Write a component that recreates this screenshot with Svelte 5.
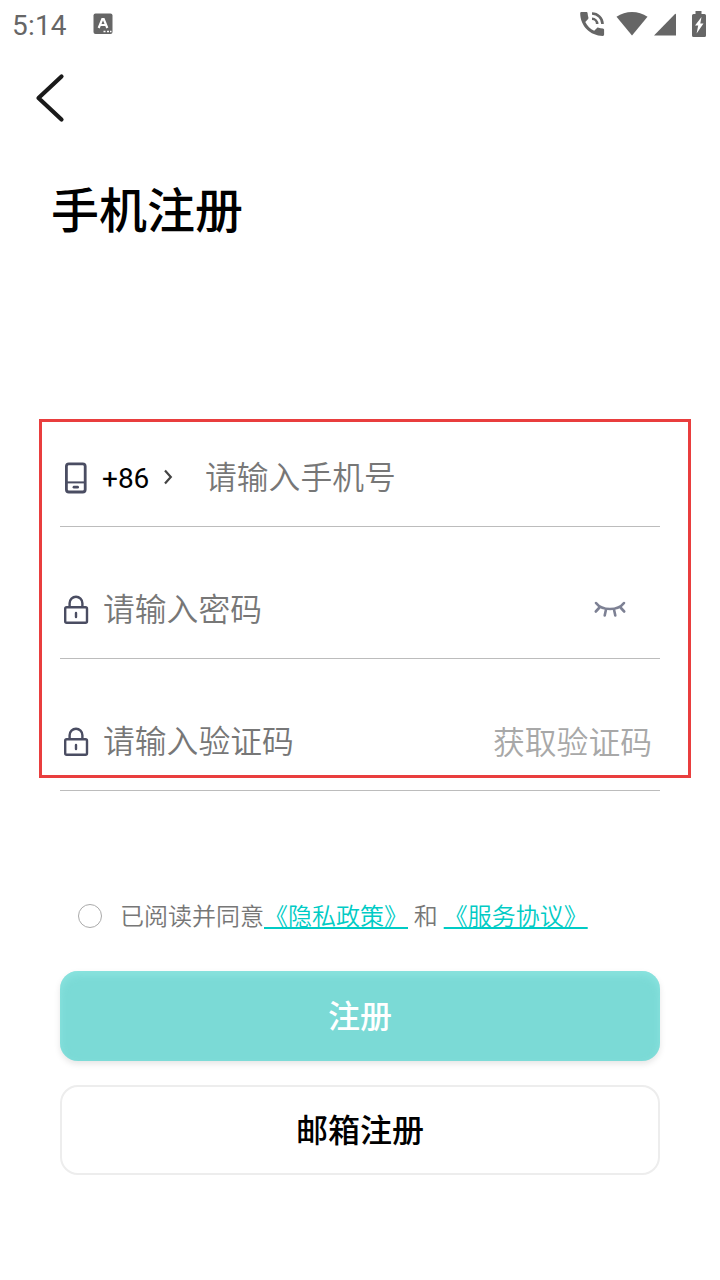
<style>
  :global(body) {
    background: #fff;
  }

  .page {
    position: relative;
    width: 720px;
    height: 1280px;
    box-sizing: border-box;
    overflow: hidden;
    background: #fff;
    color: #000;
    font-family: Roboto, "Noto Sans CJK SC", sans-serif;
  }

  svg {
    display: block;
    flex: none;
  }

  .status {
    display: flex;
    align-items: center;
    height: 48px;
    padding: 0 13px 0 12px;
    color: #666;
  }

  .time {
    width: 81px;
    font-size: 28px;
    line-height: 48px;
    padding-top: 3px;
    letter-spacing: 0.2px;
  }

  .status-icons {
    display: flex;
    align-items: center;
    margin-left: auto;
  }

  .back {
    display: block;
    margin: 24px 0 0 34px;
    padding: 0;
    border: 0;
    background: none;
  }

  h1 {
    margin: 52px 0 0 51px;
    height: 72px;
    font-size: 48px;
    font-weight: 500;
    line-height: 72px;
  }

  .fields {
    margin: 182px 60px 0;
  }

  .row {
    display: flex;
    align-items: center;
    height: 96px;
    margin-top: 35px;
    border-bottom: 1px solid #bcbcbc;
  }

  .row:first-child {
    margin-top: 0;
  }

  .code {
    display: flex;
    align-items: center;
    width: 103px;
    padding: 2px 0 0;
    border: 0;
    background: none;
    color: #000;
    font-family: inherit;
    font-size: 28px;
    line-height: 32px;
  }

  .code svg {
    margin: -4px 0 0 14px;
  }

  input {
    flex: 1;
    min-width: 0;
    height: 60px;
    padding: 0;
    border: 0;
    outline: none;
    background: none;
    color: #000;
    font-family: inherit;
    font-size: 31.8px;
    font-weight: 350;
  }

  input::placeholder {
    color: #777;
    opacity: 1;
  }

  .icon {
    margin: -1px 11px 0 0;
  }

  .eye {
    margin-right: 32px;
    padding: 0;
    border: 0;
    background: none;
  }

  .send {
    padding: 2px 0 0;
    margin-right: 8px;
    border: 0;
    background: none;
    color: #a8a8a8;
    font-family: inherit;
    font-size: 31.8px;
    font-weight: 350;
    line-height: 60px;
  }

  .agreement {
    display: flex;
    align-items: center;
    height: 48px;
    margin: 101px 0 0 78px;
    color: #777;
    font-size: 24px;
    font-weight: 350;
    white-space: pre;
  }

  .agreement-text {
    margin-top: -3px;
  }

  .radio {
    width: 24px;
    height: 24px;
    box-sizing: border-box;
    margin-right: 18px;
    border: 1px solid #aaa;
    border-radius: 50%;
  }

  .agreement a {
    color: #00cbc5;
    text-decoration: underline 1.5px #00cbc5;
    text-underline-offset: 2px;
  }

  .actions {
    display: grid;
    gap: 24px;
    margin: 31px 60px 0;
  }

  .btn {
    height: 90px;
    box-sizing: border-box;
    padding: 0 0 5px;
    border: 2px solid #ededed;
    border-radius: 18px;
    background: #fff;
    color: #000;
    font-family: inherit;
    font-size: 32px;
    font-weight: 500;
  }

  .btn.primary {
    border: 0;
    background: #7bdad6;
    color: #fff;
    box-shadow:
      0 3px 6px rgba(0, 0, 0, 0.1),
      inset 0 4px 9px rgba(150, 235, 230, 0.6);
  }

  .highlight {
    position: absolute;
    left: 39px;
    top: 419px;
    width: 652px;
    height: 359px;
    box-sizing: border-box;
    border: 3px solid #e93e3e;
    pointer-events: none;
  }
</style>

<script lang="ts">
  let phone = "";
  let password = "";
  let code = "";
  let agreed = false;
</script>

{#snippet lock()}
  <svg class="icon" width="32" height="32" viewBox="0 0 32 32" fill="none" stroke="#4a4d62" stroke-width="2.4">
    <rect x="5.2" y="13.2" width="21.8" height="15.6" rx="1.5" />
    <path d="M9.6 13V9.2a6.4 6.4 0 0 1 12.8 0V13" />
    <path d="M16 19v4" stroke-linecap="round" />
  </svg>
{/snippet}

<div class="page">
  <div class="status">
    <span class="time">5:14</span>
    <svg width="20" height="22" viewBox="0 0 20 22">
      <rect x="0.5" y="0.5" width="19" height="20.5" rx="2" fill="#666" />
      <path d="M5.7 15 9.3 6h1.4l3.6 9M7 12h6" fill="none" stroke="#fff" stroke-width="2.2" />
      <path d="M10.5 18.5h2M14 18.5h2M17 18.5h1.5" stroke="#fff" stroke-width="1.5" />
    </svg>
    <div class="status-icons">
      <svg width="26" height="26" viewBox="0 0 26 26">
        <path
          d="M2.5 1h4.8c.8 0 1.2.5 1.3 1.2.1 1.5.4 3 .8 4.4.2.6 0 1.1-.3 1.5L6.3 10.9c2 4 4.9 6.9 8.9 8.9l2.8-2.8c.4-.4.9-.5 1.5-.3 1.4.4 2.9.7 4.4.8.7.1 1.2.5 1.2 1.3v4.8c0 .7-.5 1.3-1.3 1.3C11.2 24.9 1.2 14.9 1.2 2.3c0-.8.6-1.3 1.3-1.3Z"
          fill="#666"
        />
        <path d="M13 2.5A10.5 10.5 0 0 1 23.5 13M13 7.8A5.2 5.2 0 0 1 18.2 13" fill="none" stroke="#666" stroke-width="2.6" />
      </svg>
      <svg width="32" height="26" viewBox="0 0 32 26" style:margin-left="11px">
        <path d="M.5 5.8C9.5-.7 22.5-.7 31.500 5.800L16 24.500Z" fill="#666" />
      </svg>
      <svg width="24" height="24" viewBox="0 0 24 24" style:margin-left="5px">
        <path d="M1 23.500 22 2q1-.6 1 .5v21Z" fill="#666" />
      </svg>
      <svg width="16" height="26" viewBox="0 0 16 26" style:margin-left="14px">
        <path d="M4.500 0h6v3h3q1.500 0 1.500 1.500v20q0 1.500-1.500 1.500h-11Q1 26 1 24.500v-20Q1 3 2.500 3h2Z" fill="#666" />
        <path d="M10.500 6 4 14.500h3.200L5.600 22.500 12.500 12.500H9.300Z" fill="#fff" />
      </svg>
    </div>
  </div>

  <button class="back" aria-label="返回">
    <svg width="32" height="52" viewBox="0 0 32 52" fill="none" stroke="#1a1a1a" stroke-width="4.200" stroke-linecap="round" stroke-linejoin="round">
      <path d="M27.500 4.500 4.500 26l23 21.500" />
    </svg>
  </button>

  <h1>手机注册</h1>

  <div class="fields">
    <div class="row">
      <svg class="icon" width="31" height="32" viewBox="0 0 31 32" fill="none" stroke="#4a4d62" stroke-width="2.800">
        <rect x="6.400" y="1.800" width="18.800" height="28.200" rx="2.500" />
        <path d="M7 20.400h18" stroke-width="2" />
        <path d="M14 25.200h3.600" stroke-linecap="round" />
      </svg>
      <button class="code">
        +86
        <svg width="10" height="16" viewBox="0 0 10 16" fill="none" stroke="#444" stroke-width="2.200">
          <path d="M2 1.500 7.800 8 2 14.500" />
        </svg>
      </button>
      <input type="tel" bind:value={phone} placeholder="请输入手机号" />
    </div>

    <div class="row">
      {@render lock()}
      <input type="password" bind:value={password} placeholder="请输入密码" />
      <button class="eye" aria-label="显示密码">
        <svg width="36" height="20" viewBox="0 0 36 20" fill="none" stroke="#7d8194" stroke-width="2.600" stroke-linecap="round">
          <path d="M4 3C10 11 26 11 32 3" />
          <path d="M7.500 7.500 3.800 11.500M14 9.500 12.700 15.500M22 9.500l1.300 6M28.500 7.500l3.700 4" />
        </svg>
      </button>
    </div>

    <div class="row">
      {@render lock()}
      <input bind:value={code} placeholder="请输入验证码" />
      <button class="send">获取验证码</button>
    </div>
  </div>

  <div class="agreement">
    <span class="radio" role="radio" tabindex="-1" aria-checked={agreed} aria-label="同意"></span>
    <span class="agreement-text">已阅读并同意<a href="#privacy">《隐私政策》</a> 和 <a href="#service">《服务协议》</a></span>
  </div>

  <div class="actions">
    <button class="btn primary">注册</button>
    <button class="btn">邮箱注册</button>
  </div>

  <div class="highlight"></div>
</div>
